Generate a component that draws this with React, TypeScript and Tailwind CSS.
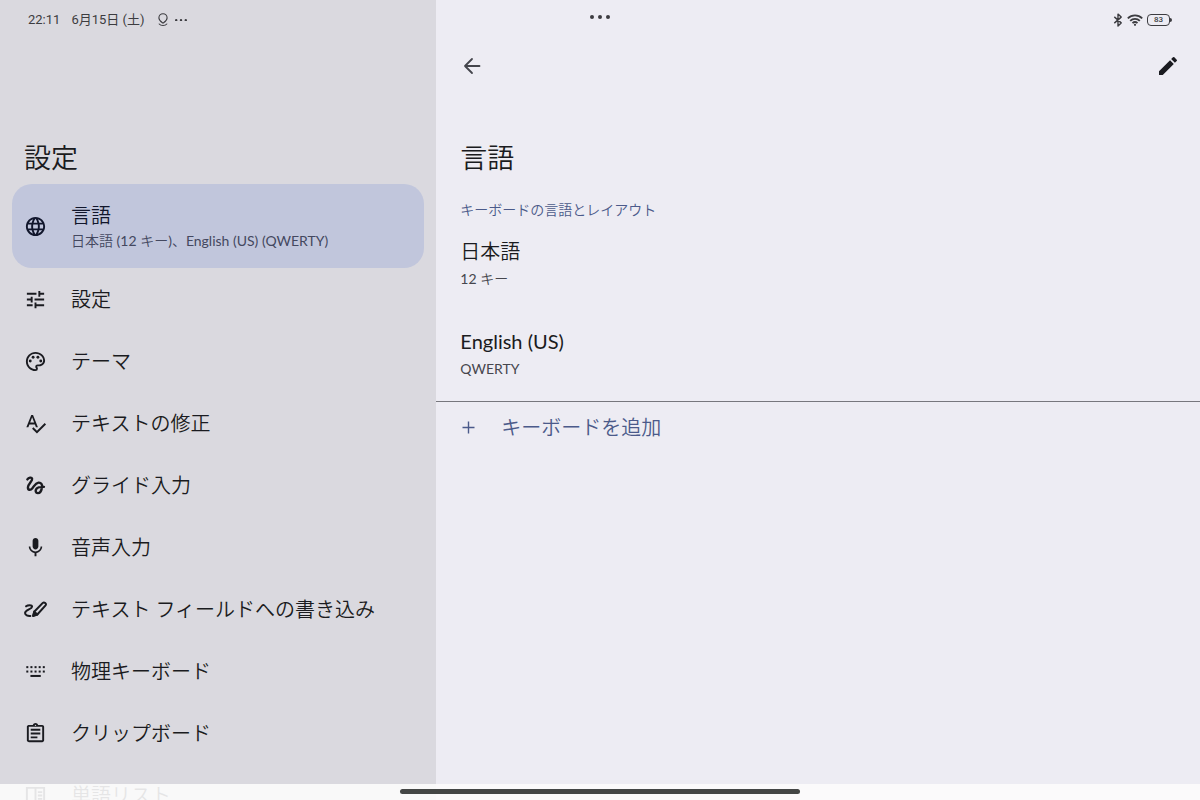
import type { ReactNode } from "react";
import { MdEdit, MdLanguage, MdMic, MdOutlineAssignment, MdOutlinePalette, MdSpellcheck, MdTune } from "react-icons/md";

const iconClass = "size-[23px] shrink-0";

function GlideIcon() {
  return (
    <svg className={iconClass} viewBox="0 0 24 24" fill="none" stroke="currentColor" strokeWidth="2.5" strokeLinecap="round" strokeLinejoin="round" aria-hidden="true">
      <path d="M3.5 5.6C4.8 3.7 8 3 8.5 5C9 7.2 4.2 10.4 4.1 13.8C4 17.2 6.8 17.2 8.8 14.8C10.8 12.4 12 9.4 15.1 9C18 8.7 19.3 11.2 18.8 14C18.2 17.3 16.6 20 14.4 20C12.2 20 11.4 17.4 13 15.4C14.4 13.7 17.4 13.4 20.8 13.4" />
    </svg>
  );
}

function ScribeIcon() {
  return (
    <svg className={iconClass} viewBox="0 0 24 24" fill="none" stroke="currentColor" strokeWidth="2.1" strokeLinecap="round" strokeLinejoin="round" aria-hidden="true">
      <path d="M2.2 8.7C4 7.2 8.2 6.8 8.4 9C8.6 11.6 1.2 12.3 1.1 15.6C1 18 4 18.9 6.6 18.7" />
      <path d="M9.8 18.4L10.9 14.1L19.6 5.1C21.1 3.8 23.8 6 22.5 7.7L13.9 17.2Z" />
      <path d="M9.4 18.8L10.7 14.2L13.9 17.3Z" fill="currentColor" />
    </svg>
  );
}

function KeyboardIcon() {
  return (
    <svg className={iconClass} viewBox="0 0 24 24" fill="currentColor" aria-hidden="true">
      {[2.4, 6.7, 11, 15.3, 19.6].map((x) => (
        <g key={x}>
          <rect x={x} y="6.4" width="2.1" height="2.1" />
          <rect x={x} y="11" width="2.1" height="2.1" />
        </g>
      ))}
      <rect x="6.7" y="15.6" width="10.8" height="2.1" />
    </svg>
  );
}

function DictionaryIcon() {
  return (
    <svg className={iconClass} viewBox="0 0 24 24" fill="none" stroke="currentColor" strokeWidth="2" aria-hidden="true">
      <path d="M3 4H21V21H3ZM12 4V21M14.5 8.5H19M14.5 12H19M14.5 15.5H19" />
    </svg>
  );
}

function BackIcon() {
  return (
    <svg className="size-6" viewBox="0 0 24 24" fill="none" stroke="currentColor" strokeWidth="1.8" strokeLinecap="round" strokeLinejoin="round" aria-hidden="true">
      <path d="M12 5L5 12L12 19M5 12H19.5" />
    </svg>
  );
}

function PinIcon() {
  return (
    <svg className="h-[14px] w-3" viewBox="0 0 12 14" fill="none" stroke="currentColor" strokeWidth="1.1" strokeLinecap="round" aria-hidden="true">
      <path d="M6 10.1C4.4 8.9 1.9 7.4 1.9 4.9A4.1 4.1 0 0 1 10.1 4.9C10.1 7.4 7.6 8.9 6 10.1Z" />
      <path d="M2.2 11C3.8 13 8.2 13 9.8 11" />
    </svg>
  );
}

function Dots({ className }: { className: string }) {
  return (
    <svg className={className} viewBox="0 0 20 4" fill="currentColor" aria-hidden="true">
      <circle cx="2" cy="2" r="2" />
      <circle cx="10" cy="2" r="2" />
      <circle cx="18" cy="2" r="2" />
    </svg>
  );
}

function BluetoothIcon() {
  return (
    <svg className="h-[14px] w-[10px]" viewBox="0 0 10 14" fill="none" stroke="currentColor" strokeWidth="1.4" strokeLinejoin="round" aria-hidden="true">
      <path d="M1.3 3.9L8.2 9.9L5 12.9V1.1L8.2 4.1L1.3 10.1" />
    </svg>
  );
}

function WifiIcon() {
  return (
    <svg className="h-3 w-4" viewBox="0 0 16 12" fill="none" stroke="currentColor" strokeWidth="1.8" aria-hidden="true">
      <path d="M.8 4.3C4.8 .3 11.2 .3 15.2 4.3M3.2 6.8C5.8 4.2 10.2 4.2 12.8 6.8M5.5 9.1C7 7.7 9 7.7 10.5 9.1" />
      <circle cx="8" cy="10.8" r="1.1" fill="currentColor" stroke="none" />
    </svg>
  );
}

type MenuItem = { label: string; icon: ReactNode; detail?: string };

const menu: MenuItem[] = [
  { label: "言語", detail: "日本語 (12 キー)、English (US) (QWERTY)", icon: <MdLanguage className={iconClass} /> },
  { label: "設定", icon: <MdTune className={iconClass} /> },
  { label: "テーマ", icon: <MdOutlinePalette className={iconClass} /> },
  { label: "テキストの修正", icon: <MdSpellcheck className={iconClass} /> },
  { label: "グライド入力", icon: <GlideIcon /> },
  { label: "音声入力", icon: <MdMic className={iconClass} /> },
  { label: "テキスト フィールドへの書き込み", icon: <ScribeIcon /> },
  { label: "物理キーボード", icon: <KeyboardIcon /> },
  { label: "クリップボード", icon: <MdOutlineAssignment className={iconClass} /> },
  { label: "単語リスト", icon: <DictionaryIcon /> },
];

const languages = [
  { name: "日本語", layout: "12 キー" },
  { name: "English (US)", layout: "QWERTY" },
];

export default function App() {
  return (
    <div lang="ja" className="relative flex h-screen overflow-hidden bg-[#edecf3] font-['Lato','Noto_Sans_CJK_JP_DemiLight','Noto_Sans_CJK_JP',sans-serif] text-[#1a1b20]">
      <aside className="w-4/11 shrink-0 bg-[#dad9df]">
        <div className="flex h-10 items-center pl-7 font-['Roboto','Noto_Sans_CJK_JP',sans-serif] text-[13px] text-[#3c3c40]">
          <time className="mr-[11px]">22:11</time>
          <span className="mr-3">6月15日 (土)</span>
          <PinIcon />
          <Dots className="ml-1.5 w-3" />
        </div>
        <h1 className="mt-[100px] px-6 text-[27px] leading-9">設定</h1>
        <nav className="mt-2 px-3">
          {menu.map((item) => (
            <a
              key={item.label}
              href="#"
              aria-current={item.detail ? "page" : undefined}
              className={
                item.detail
                  ? "flex h-[84px] items-center gap-6 rounded-[20px] bg-[#c1c6dc] px-3 text-[#11162c]"
                  : "flex h-[62px] items-center gap-6 px-3"
              }
            >
              {item.icon}
              <span className="flex flex-col gap-0.5 whitespace-nowrap">
                <span className="text-xl leading-7">{item.label}</span>
                {item.detail && <span className="text-sm leading-5 text-[#444860]">{item.detail}</span>}
              </span>
            </a>
          ))}
        </nav>
      </aside>

      <main className="min-w-0 flex-1">
        <div className="flex h-10 items-center justify-end gap-1 pr-7 text-[#3c3c40]">
          <BluetoothIcon />
          <WifiIcon />
          <span className="flex items-center">
            <span className="flex h-3 w-[23px] items-center justify-center rounded-[4px] border border-current font-['Roboto',sans-serif] text-[8px] leading-none font-medium">83</span>
            <span className="h-1 w-0.5 rounded-r bg-current" />
          </span>
        </div>
        <div className="flex h-[52px] items-center justify-between px-5">
          <button type="button" aria-label="戻る" className="pl-1 text-[#44454c]">
            <BackIcon />
          </button>
          <button type="button" aria-label="編集">
            <MdEdit className="size-6" />
          </button>
        </div>
        <h2 className="mt-12 px-6 text-[27px] leading-9">言語</h2>
        <h3 className="mt-[26px] px-6 text-sm leading-4 text-[#4b5a8a]">キーボードの言語とレイアウト</h3>
        <div className="border-b border-[#77777d] pb-[3px]">
          {languages.map((language) => (
            <button key={language.name} type="button" className="flex h-[90px] w-full flex-col items-start justify-center gap-1 px-6">
              <span className="text-xl leading-7">{language.name}</span>
              <span className="text-sm leading-5 text-[#46464d]">{language.layout}</span>
            </button>
          ))}
        </div>
        <button type="button" className="flex h-[50px] w-full items-center gap-6 px-6 text-[#4b5a8a]">
          <svg className="size-[17px]" viewBox="0 0 17 17" stroke="currentColor" strokeWidth="1.4" aria-hidden="true">
            <path d="M8.5 2.5V14.5M2.5 8.5H14.5" />
          </svg>
          <span className="text-xl leading-7">キーボードを追加</span>
        </button>
      </main>

      <button type="button" aria-label="ウィンドウ メニュー" className="absolute top-[15px] left-1/2 -translate-x-1/2 text-[#3c3c40]">
        <Dots className="w-5" />
      </button>

      <div className="absolute inset-x-0 bottom-0 flex h-4 justify-center bg-[#fcfcfc]/90 pt-[5px]">
        <div className="h-[5px] w-1/3 min-w-40 rounded-full bg-[#444645]" />
      </div>
    </div>
  );
}
